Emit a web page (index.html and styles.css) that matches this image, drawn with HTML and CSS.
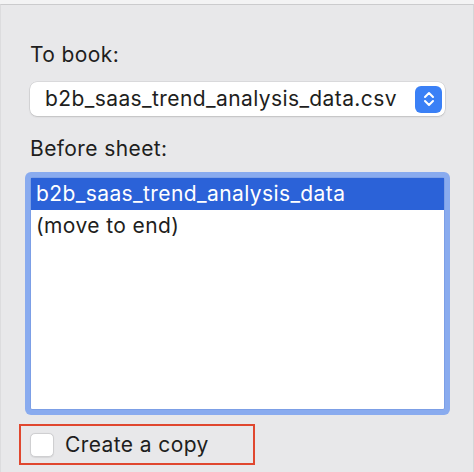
FILE: index.html
```html
<html lang="en">

<head>
    <meta charset="UTF-8">
    <meta name="viewport" content="width=device-width, initial-scale=1.0">
    <title>Move or Copy</title>
    <link rel="stylesheet" href="styles.css">
</head>

<body>
    <div class="sheet">
        <div class="panel">
            <div class="label">To book:</div>
            <div class="select">
                <span class="select-text">b2b_saas_trend_analysis_data.csv</span>
                <span class="stepper">
                    <svg width="12" height="18" viewBox="0 0 12 18">
                        <path d="M2 7 L6 3 L10 7" fill="none" stroke="#fff" stroke-width="2" stroke-linecap="round" stroke-linejoin="round"/>
                        <path d="M2 11 L6 15 L10 11" fill="none" stroke="#fff" stroke-width="2" stroke-linecap="round" stroke-linejoin="round"/>
                    </svg>
                </span>
            </div>
            <div class="label label-sheet">Before sheet:</div>
            <div class="list">
                <div class="row selected">b2b_saas_trend_analysis_data</div>
                <div class="row">(move to end)</div>
            </div>
            <div class="copy">
                <span class="check"></span>
                <span class="copy-text">Create a copy</span>
            </div>
        </div>
    </div>
</body>

</html>
```

FILE: styles.css
```css
body {
    margin: 0;
    background: #f3f3f4;
    font-family: 'Inter', 'Liberation Sans', sans-serif;
    letter-spacing: 0.4px;
    color: #1e1e20;
}

.sheet {
    padding-top: 4px;
    width: 474px;
    height: 472px;
    box-sizing: border-box;
}

.panel {
    height: 468px;
    box-sizing: border-box;
    background: #e8e8ea;
    border-top: 1px solid #cbcbcd;
    border-right: 1px solid #d6d6d8;
    border-left: 1px solid #dcdcde;
    padding: 37px 28px 0 29px;
}

.label {
    font-size: 21px;
    line-height: 26px;
}

.select {
    margin-top: 14px;
    height: 34px;
    background: #ffffff;
    border-radius: 7px;
    box-shadow: 0 0 0 0.5px rgba(0, 0, 0, 0.12), 0 1px 2px rgba(0, 0, 0, 0.12);
    display: flex;
    align-items: center;
    justify-content: space-between;
    padding: 0 3px 0 15px;
}

.select-text {
    font-size: 21px;
    line-height: 26px;
}

.stepper {
    width: 27px;
    height: 27px;
    border-radius: 6px;
    background: #3a80f6;
    display: flex;
    align-items: center;
    justify-content: center;
}

.label-sheet {
    margin-top: 20px;
}

.list {
    margin-top: 15px;
    height: 231px;
    background: #ffffff;
    border: 1px solid #7c9fe6;
    box-shadow: 0 0 0 5px #89abef;
    border-radius: 2px;
}

.row {
    height: 32px;
    line-height: 32px;
    padding-left: 5px;
    font-size: 21px;
}

.row.selected {
    background: #2b62d8;
    color: #ffffff;
}

.copy {
    margin: 14px 0 0 -11px;
    width: 236px;
    height: 41px;
    box-sizing: border-box;
    border: 2px solid #e0472f;
    display: flex;
    align-items: center;
    gap: 11px;
    padding-left: 9px;
}

.check {
    width: 22px;
    height: 22px;
    background: #ffffff;
    border: 1px solid #cfcfd1;
    border-radius: 5px;
    box-shadow: 0 0.5px 1px rgba(0, 0, 0, 0.08);
}

.copy-text {
    font-size: 21px;
    line-height: 26px;
}
```
